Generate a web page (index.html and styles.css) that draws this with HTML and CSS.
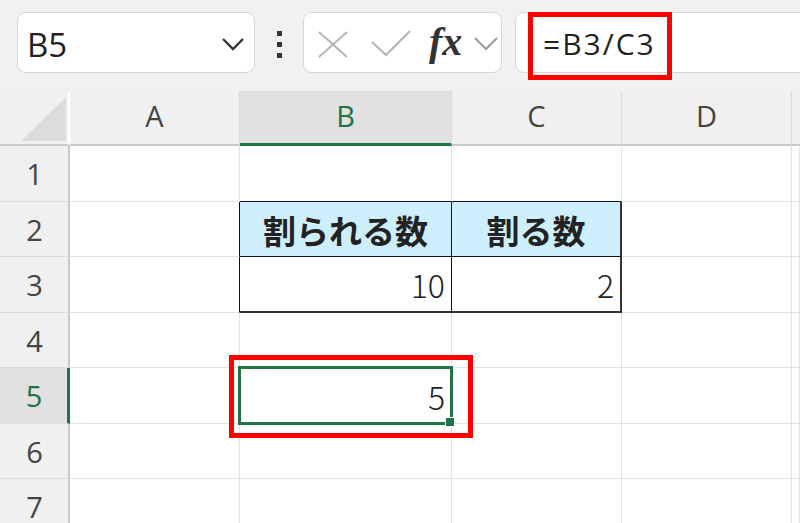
FILE: index.html
```html
<!DOCTYPE html>
<html lang="ja">
<head>
<meta charset="utf-8">
<title>Excel</title>
<link rel="stylesheet" href="styles.css">
</head>
<body>
<div class="toolbar">
  <div class="namebox">
    <span class="name">B5</span>
    <svg class="chev" width="24" height="14" viewBox="0 0 24 14"><path d="M2 2 L12 12 L22 2" fill="none" stroke="#333" stroke-width="2.4"/></svg>
  </div>
  <div class="dots"><i></i><i></i><i></i></div>
  <div class="fxbox">
    <svg class="ico-x" width="30" height="27" viewBox="0 0 30 27"><path d="M1 1 L29 26 M29 1 L1 26" fill="none" stroke="#b4b4b4" stroke-width="2"/></svg>
    <svg class="ico-check" width="40" height="27" viewBox="0 0 40 27"><path d="M1 12 L15 25 L39 1" fill="none" stroke="#b4b4b4" stroke-width="2"/></svg>
    <span class="fx">fx</span>
    <svg class="chev2" width="24" height="14" viewBox="0 0 24 14"><path d="M1 1 L12 12 L23 1" fill="none" stroke="#9a9a9a" stroke-width="2"/></svg>
  </div>
  <div class="formula">
    <span class="ftext">=B3/C3</span>
    <div class="redbox redbox-formula"></div>
  </div>
</div>

<div class="grid">
  <div class="corner"><svg width="68" height="55" viewBox="0 0 68 55"><polygon points="21,50 66,50 66,6" fill="#dcdcdc"/></svg></div>
  <div class="ch">A</div>
  <div class="ch ch-sel">B</div>
  <div class="ch">C</div>
  <div class="ch">D</div>
  <div class="ch ch-last"></div>

  <div class="rh">1</div>
  <div class="c"></div><div class="c bb"></div><div class="c bb"></div><div class="c"></div><div class="c"></div>

  <div class="rh">2</div>
  <div class="c br"></div>
  <div class="c th br bb">割られる数</div>
  <div class="c th brk bb">割る数</div>
  <div class="c"></div><div class="c"></div>

  <div class="rh">3</div>
  <div class="c br"></div>
  <div class="c num br bbk">10</div>
  <div class="c num brk bbk">2</div>
  <div class="c"></div><div class="c"></div>

  <div class="rh">4</div>
  <div class="c"></div><div class="c"></div><div class="c"></div><div class="c"></div><div class="c"></div>

  <div class="rh rh-sel">5</div>
  <div class="c"></div>
  <div class="c num active">5
    <div class="cursor"></div>
    <div class="handle"></div>
    <div class="redbox redbox-cell"></div>
  </div>
  <div class="c"></div><div class="c"></div><div class="c"></div>

  <div class="rh">6</div>
  <div class="c"></div><div class="c"></div><div class="c"></div><div class="c"></div><div class="c"></div>

  <div class="rh">7</div>
  <div class="c"></div><div class="c"></div><div class="c"></div><div class="c"></div><div class="c"></div>
</div>
</body>
</html>
```

FILE: styles.css
```css
* { box-sizing: border-box; }
html, body { margin: 0; padding: 0; }
body {
  width: 800px;
  height: 523px;
  overflow: hidden;
  background: #f0f0f0;
  font-family: "Open Sans", "Noto Sans", "Noto Sans CJK JP", sans-serif;
  color: #222;
}

.toolbar {
  height: 91px;
  display: flex;
  align-items: flex-start;
  padding: 12px 0 0 17px;
  background: #f1f1f1;
}
.namebox {
  width: 238px;
  height: 61px;
  background: #fff;
  border: 1px solid #d6d6d6;
  border-radius: 9px;
  display: flex;
  align-items: center;
  justify-content: space-between;
  padding: 0 9px 0 9px;
}
.name {
  font-size: 33px;
  font-weight: 400;
  color: #222;
  line-height: 1;
  padding-top: 4px;
}
.chev { margin-top: 2px; }

.dots {
  width: 5px;
  margin: 19px 21px 0 22px;
  display: flex;
  flex-direction: column;
  gap: 6px;
}
.dots i {
  display: block;
  width: 5px;
  height: 5px;
  background: #333;
}

.fxbox {
  width: 199px;
  height: 61px;
  background: #fff;
  border: 1px solid #d6d6d6;
  border-radius: 9px;
  display: flex;
  align-items: center;
  padding-left: 14px;
}
.ico-x { margin-top: 4px; }
.ico-check { margin-left: 23px; margin-top: 2px; }
.fx {
  margin-left: 18px;
  font-family: "Liberation Serif", "DejaVu Serif", serif;
  font-style: italic;
  font-weight: bold;
  font-size: 40px;
  color: #333;
  line-height: 1;
  letter-spacing: 0;
  margin-top: -2px;
}
.chev2 { margin-left: 12px; margin-top: 3px; }

.formula {
  position: relative;
  flex: 1;
  height: 61px;
  margin-left: 13px;
  margin-right: -20px;
  background: #fff;
  border: 1px solid #d6d6d6;
  border-radius: 9px;
  display: flex;
  align-items: center;
  padding-left: 27px;
}
.ftext {
  font-size: 30px;
  letter-spacing: 2px;
  color: #222;
  line-height: 1;
  padding-top: 2px;
}
.redbox {
  position: absolute;
  border: 5px solid #f00;
}
.redbox-formula {
  left: 12px;
  top: -1px;
  width: 144px;
  height: 68px;
}

.grid {
  display: grid;
  grid-template-columns: 70px 170px 212px 170px 170px 1fr;
  grid-template-rows: 55px 56px 55px 56px 55px 56px 55px 56px;
  background: #fff;
}
.corner {
  background: #f0f0f0;
  border-right: 2px solid #fff;
  border-bottom: 2px solid #c8c8c8;
}
.corner svg { display: block; }
.ch {
  background: #f0f0f0;
  border-right: 1px solid #d9d9d9;
  border-bottom: 2px solid #c8c8c8;
  display: flex;
  align-items: center;
  justify-content: center;
  font-size: 29px;
  color: #444;
  padding-bottom: 4px;
}
.ch-sel {
  background: #e1e1e1;
  color: #217346;
  border-bottom: 3px solid #217346;
}
.ch-last { border-right: none; }
.rh {
  background: #f0f0f0;
  border-right: 2px solid #c8c8c8;
  border-bottom: 1px solid #dcdcdc;
  display: flex;
  align-items: center;
  justify-content: center;
  font-size: 29px;
  color: #444;
  padding-left: 1px;
}
.rh-sel {
  background: #e1e1e1;
  color: #217346;
  border-right: 3px solid #217346;
}
.c {
  border-right: 1px solid #e1e1e1;
  border-bottom: 1px solid #e1e1e1;
  font-family: "Noto Sans CJK JP", "Noto Sans", sans-serif;
  color: #222;
}
.bb { border-bottom: 1px solid #111; }
.br { border-right: 1px solid #111; }
.bbk { border-bottom: 2px solid #333; }
.brk { border-right: 2px solid #333; }
.th {
  background: #cdeefb;
  font-weight: bold;
  font-size: 33px;
  display: flex;
  align-items: center;
  justify-content: center;
  padding-top: 1px;
}
.num {
  font-size: 32px;
  font-weight: 300;
  display: flex;
  align-items: center;
  justify-content: flex-end;
  padding-right: 6px;
}
.active { position: relative; }
.cursor {
  position: absolute;
  left: -2px;
  top: -2px;
  right: -2px;
  bottom: -2px;
  border: 3px solid #217346;
}
.handle {
  position: absolute;
  right: -4px;
  bottom: -4px;
  width: 10px;
  height: 10px;
  background: #217346;
  border: 1px solid #fff;
}
.redbox-cell {
  left: -11px;
  top: -13px;
  right: -22px;
  bottom: -15px;
}
```
